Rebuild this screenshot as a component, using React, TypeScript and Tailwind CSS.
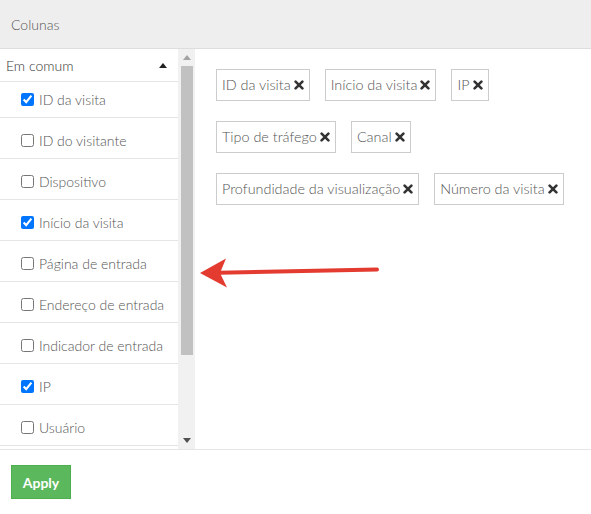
import React from "react";

const items: { label: string; checked: boolean }[] = [
  { label: "ID da visita", checked: true },
  { label: "ID do visitante", checked: false },
  { label: "Dispositivo", checked: false },
  { label: "Início da visita", checked: true },
  { label: "Página de entrada", checked: false },
  { label: "Endereço de entrada", checked: false },
  { label: "Indicador de entrada", checked: false },
  { label: "IP", checked: true },
  { label: "Usuário", checked: false },
];

const tagRows: string[][] = [
  ["ID da visita", "Início da visita", "IP"],
  ["Tipo de tráfego", "Canal"],
  ["Profundidade da visualização", "Número da visita"],
];

function XIcon() {
  return (
    <svg width="10" height="10" viewBox="0 0 10 10" className="shrink-0">
      <path d="M1.6 1.6 L8.4 8.4 M8.4 1.6 L1.6 8.4" stroke="#333" strokeWidth="2.6" strokeLinecap="round" />
    </svg>
  );
}

function Tag({ label }: { label: string }) {
  return (
    <div className="flex h-[32px] items-center gap-[3px] border border-[#cccccc] pl-[5px] pr-[5px] text-[14.4px] font-light text-[#555555]">
      <span>{label}</span>
      <XIcon />
    </div>
  );
}

export default function App() {
  return (
    <div
      className="relative flex h-[514px] w-[591px] flex-col overflow-hidden bg-white"
      style={{ fontFamily: "Lato, 'Open Sans', sans-serif" }}
    >
      <div className="flex h-[49px] shrink-0 items-center border-b border-[#dddddd] bg-[#eeeeee] pl-[11px] text-[14px] font-light text-[#555555]">
        Colunas
      </div>
      <div className="flex h-[400px] shrink-0">
        <div className="w-[178px] shrink-0 overflow-hidden">
          <div className="flex h-[33px] items-center justify-between border-b border-[#e5e5e5] pl-[6px] pr-[11px] text-[14px] font-light text-[#333333]">
            <span>Em comum</span>
            <svg width="8" height="5" viewBox="0 0 8 5">
              <path d="M0 5 L4 0 L8 5 Z" fill="#222" />
            </svg>
          </div>
          {items.map((it, i) => (
            <label
              key={it.label}
              className={
                i === 0
                  ? "flex h-[36px] items-center gap-[5px] border-b border-[#e5e5e5] pl-[21px] text-[14px] font-light text-[#555555]"
                  : "flex h-[41px] items-center gap-[5px] border-b border-[#e5e5e5] pl-[21px] pt-[5px] text-[14px] font-light text-[#555555]"
              }
            >
              <input type="checkbox" defaultChecked={it.checked} className="m-0 h-[13px] w-[13px]" />
              <span>{it.label}</span>
            </label>
          ))}
        </div>
        <div className="flex w-[17px] shrink-0 flex-col items-center bg-[#f1f1f1]">
          <div className="flex h-[17px] w-full items-center justify-center">
            <svg width="8" height="5" viewBox="0 0 8 5">
              <path d="M0 5 L4 0 L8 5 Z" fill="#a3a3a3" />
            </svg>
          </div>
          <div className="h-[289px] w-[12px] bg-[#c1c1c1]" />
          <div className="flex-1" />
          <div className="flex h-[17px] w-full items-center justify-center">
            <svg width="8" height="5" viewBox="0 0 8 5">
              <path d="M0 0 L8 0 L4 5 Z" fill="#505050" />
            </svg>
          </div>
        </div>
        <div className="flex flex-1 flex-col gap-[20px] pl-[21px] pt-[20px]">
          {tagRows.map((row, r) => (
            <div key={r} className="flex gap-[15px]">
              {row.map((t) => (
                <Tag key={t} label={t} />
              ))}
            </div>
          ))}
        </div>
      </div>
      <div className="flex flex-1 items-start border-t border-[#e5e5e5] pl-[11px] pt-[15px]">
        <button className="flex h-[34px] w-[60px] items-center justify-center border border-[#4cae4c] bg-[#5cb85c] text-[14px] font-bold text-white">
          Apply
        </button>
      </div>
      <svg
        className="pointer-events-none absolute left-0 top-0"
        width="591"
        height="514"
        viewBox="0 0 591 514"
      >
        <path d="M219 272.8 L377 269.5" stroke="#e33b2f" strokeWidth="4" strokeLinecap="round" />
        <path d="M200 273 L226 258.5 L220 273 L227 287.5 Z" fill="#e33b2f" />
      </svg>
    </div>
  );
}
